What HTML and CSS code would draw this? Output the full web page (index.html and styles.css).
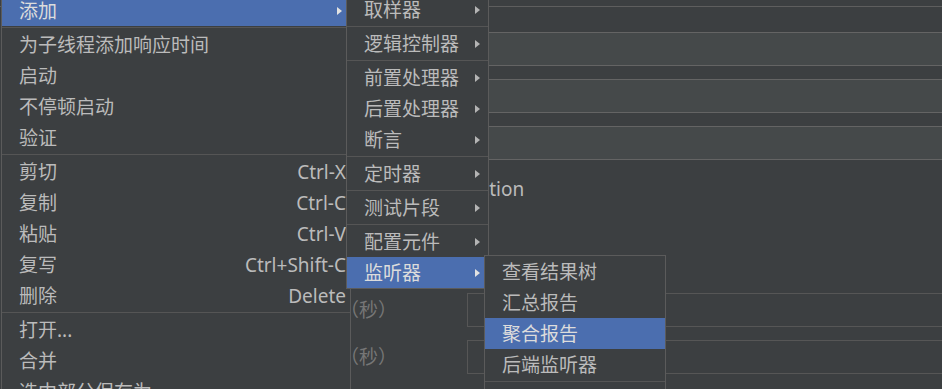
FILE: index.html
```html
<!DOCTYPE html>
<html>
  <head>
    <meta charset="utf-8">
    <title>线程组 - 右键菜单</title>
    <link rel="stylesheet" href="styles.css">
  </head>
  <body>
    <!-- Thread group form behind the popup -->
    <div class="panel">
      <div class="rule"></div>
      <div class="row first"><div class="field"></div></div>
      <div class="row"><div class="field"></div></div>
      <div class="row"><div class="field"></div></div>
      <div class="row caption">Action</div>
      <div class="row labelled timing">
        <span class="label">持续时间（秒）</span>
        <div class="field off"></div>
      </div>
      <div class="row labelled">
        <span class="label">启动延迟（秒）</span>
        <div class="field off"></div>
      </div>
    </div>

    <!-- Right click menu -->
    <div class="menu main-menu">
      <div class="item active"><span>添加</span><i class="arrow"></i></div>
      <div class="sep"></div>
      <div class="item"><span>为子线程添加响应时间</span></div>
      <div class="item"><span>启动</span></div>
      <div class="item"><span>不停顿启动</span></div>
      <div class="item"><span>验证</span></div>
      <div class="sep"></div>
      <div class="item"><span>剪切</span><span class="key">Ctrl-X</span></div>
      <div class="item"><span>复制</span><span class="key">Ctrl-C</span></div>
      <div class="item"><span>粘贴</span><span class="key">Ctrl-V</span></div>
      <div class="item"><span>复写</span><span class="key">Ctrl+Shift-C</span></div>
      <div class="item"><span>删除</span><span class="key">Delete</span></div>
      <div class="sep"></div>
      <div class="item"><span>打开...</span></div>
      <div class="item"><span>合并</span></div>
      <div class="item"><span>选中部分保存为...</span></div>
    </div>

    <div class="menu add-menu">
      <div class="item"><span>取样器</span><i class="arrow"></i></div>
      <div class="sep"></div>
      <div class="item"><span>逻辑控制器</span><i class="arrow"></i></div>
      <div class="sep"></div>
      <div class="item"><span>前置处理器</span><i class="arrow"></i></div>
      <div class="item"><span>后置处理器</span><i class="arrow"></i></div>
      <div class="item"><span>断言</span><i class="arrow"></i></div>
      <div class="sep"></div>
      <div class="item"><span>定时器</span><i class="arrow"></i></div>
      <div class="sep"></div>
      <div class="item"><span>测试片段</span><i class="arrow"></i></div>
      <div class="sep"></div>
      <div class="item"><span>配置元件</span><i class="arrow"></i></div>
      <div class="item active"><span>监听器</span><i class="arrow"></i></div>
    </div>

    <div class="menu listener-menu">
      <div class="item"><span>查看结果树</span></div>
      <div class="item"><span>汇总报告</span></div>
      <div class="item active"><span>聚合报告</span></div>
      <div class="item"><span>后端监听器</span></div>
      <div class="sep"></div>
      <div class="item"></div>
    </div>
  </body>
</html>
```

FILE: styles.css
```css
html, body {
  margin: 0;
  height: 100%;
  overflow: hidden;
}

body {
  position: relative;
  background-color: #3c3f41;
  color: #bbbbbb;
  font-family: "Noto Sans", "Noto Sans CJK SC", sans-serif;
  font-size: 19px;
}

/* form in the background */
.panel {
  display: flex;
  flex-direction: column;
  width: 960px;
}

.rule {
  height: 6px;
  border-bottom: 1px solid #5e5e5e;
}

.row {
  display: flex;
  align-items: center;
  margin-top: 13px;
  padding-left: 467px;
}

.row.first {
  margin-top: 25px;
}

.field {
  flex: 1;
  height: 34px;
  box-sizing: border-box;
  border: 1px solid #646464;
  background-color: #45494a;
}

.field.off {
  border-color: #565656;
  background-color: #3c3f41;
}

.caption {
  height: 31px;
  padding-left: 468px;
}

.timing {
  margin-top: 89px;
}

.row.labelled {
  padding-left: 264px;
}

.label {
  width: 203px;
  color: #767676;
  line-height: 34px;
  white-space: nowrap;
}

/* popup menus */
.menu {
  position: absolute;
  box-sizing: border-box;
  border: 1px solid #5b5b5b;
  background-color: #3c3f41;
}

.main-menu {
  top: -6px;
  left: 1px;
  width: 350px;
}

.add-menu {
  top: -7px;
  left: 346px;
  width: 143px;
}

.listener-menu {
  top: 255px;
  left: 484px;
  width: 182px;
}

.item {
  display: flex;
  align-items: center;
  justify-content: space-between;
  box-sizing: border-box;
  height: 31px;
  line-height: 29px;
  padding: 2px 4px 0 17px;
  white-space: nowrap;
}

.item.active {
  background-color: #4b6eaf;
  color: #dcdcdc;
}

.sep {
  height: 1px;
  margin: 1px 0;
  background-color: #555555;
}

.arrow {
  width: 0;
  height: 0;
  margin: -2px 4px 0 0;
  border-top: 4px solid transparent;
  border-bottom: 4px solid transparent;
  border-left: 5px solid #b4b4b4;
}

.item.active .arrow {
  border-left-color: #e2e2e2;
}
```
